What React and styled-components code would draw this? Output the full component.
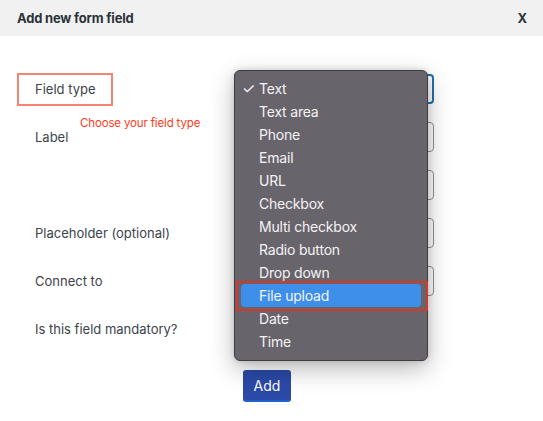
import React from "react";
import styled, { createGlobalStyle } from "styled-components";

const Global = createGlobalStyle`
  html, body { margin: 0; padding: 0; background: #fff; }
  body { font-family: Inter, "Noto Sans", sans-serif; -webkit-font-smoothing: antialiased; }
  * { box-sizing: border-box; }
`;

const Modal = styled.div`
  position: relative;
  width: 543px;
  height: 421px;
  background: #fff;
  overflow: hidden;
`;

const Header = styled.div`
  height: 36px;
  background: #f1f1f1;
  display: flex;
  align-items: center;
  justify-content: space-between;
  padding: 0 16px 0 17px;
  color: #2c3338;
  font-size: 13px;
  font-weight: 700;
  letter-spacing: -0.2px;
`;

const Close = styled.span`
  font-size: 13px;
  font-weight: 700;
`;

const Body = styled.div`
  padding-top: 38px;
`;

const FormGrid = styled.div`
  display: grid;
  grid-template-columns: 243px 191px;
  grid-auto-rows: 30px;
  row-gap: 18px;
`;

const LabelCell = styled.div`
  display: flex;
  align-items: center;
  padding-left: ${(p) => (p.$boxed ? "17px" : "35px")};
  font-size: 13px;
  color: #3c434a;
`;

const FieldTypeBox = styled.div`
  display: flex;
  align-items: center;
  width: 96px;
  height: 33px;
  border: 2px solid #f5836f;
  padding-left: 16px;
`;

const Input = styled.div`
  height: 30px;
  border: ${(p) => (p.$focus ? "2px solid #2271b1" : "1px solid #8c8f94")};
  border-radius: 4px;
  background: #fff;
`;

const CheckCell = styled.div`
  height: 18px;
`;

const ButtonRow = styled.div`
  padding: 26px 0 0 243px;
`;

const AddButton = styled.button`
  width: 48px;
  height: 32px;
  border: none;
  border-bottom: 2px solid #1f62c8;
  border-radius: 3px;
  background: #2b4aa7;
  color: #fff;
  font-family: Inter, sans-serif;
  font-size: 14px;
  padding: 0;
`;

const ErrorText = styled.div`
  position: absolute;
  left: 80px;
  top: 116px;
  font-size: 11.5px;
  letter-spacing: -0.15px;
  color: #ff3a1a;
`;

const Menu = styled.ul`
  position: absolute;
  left: 234px;
  top: 70px;
  width: 194px;
  margin: 0;
  list-style: none;
  padding: 6px 6px 7px;
  background: #68646b;
  border: 1px solid #3f3c42;
  border-radius: 6px;
  box-shadow: 0 8px 24px rgba(0, 0, 0, 0.28), 0 0 6px rgba(0, 0, 0, 0.15);
`;

const Item = styled.li`
  position: relative;
  height: 23px;
  line-height: 23px;
  padding-left: 18px;
  border-radius: 4px;
  font-size: 14px;
  letter-spacing: -0.2px;
  color: #f4f3f5;
  background: ${(p) => (p.$active ? "#3d8fea" : "transparent")};
`;

const Check = styled.span`
  position: absolute;
  left: 1px;
  top: 0;
  font-size: 15px;
`;

const Highlight = styled.div`
  position: absolute;
  left: 236px;
  top: 281px;
  width: 192px;
  height: 30px;
  border: 2px solid #cf3a2c;
`;

const items = [
  "Text",
  "Text area",
  "Phone",
  "Email",
  "URL",
  "Checkbox",
  "Multi checkbox",
  "Radio button",
  "Drop down",
  "File upload",
  "Date",
  "Time",
];

export default function App() {
  return (
    <>
      <Global />
      <Modal>
        <Header>
          <span>Add new form field</span>
          <Close>X</Close>
        </Header>
        <Body>
          <FormGrid>
            <LabelCell $boxed>
              <FieldTypeBox>Field type</FieldTypeBox>
            </LabelCell>
            <Input $focus />
            <LabelCell>Label</LabelCell>
            <Input />
            <LabelCell />
            <Input />
            <LabelCell>Placeholder (optional)</LabelCell>
            <Input />
            <LabelCell>Connect to</LabelCell>
            <Input />
            <LabelCell>Is this field mandatory?</LabelCell>
            <CheckCell />
          </FormGrid>
          <ButtonRow>
            <AddButton>Add</AddButton>
          </ButtonRow>
        </Body>
        <ErrorText>Choose your field type</ErrorText>
        <Menu>
          {items.map((t, i) => (
            <Item key={t} $active={t === "File upload"}>
              {i === 0 && <Check>✓</Check>}
              {t}
            </Item>
          ))}
        </Menu>
        <Highlight />
      </Modal>
    </>
  );
}
